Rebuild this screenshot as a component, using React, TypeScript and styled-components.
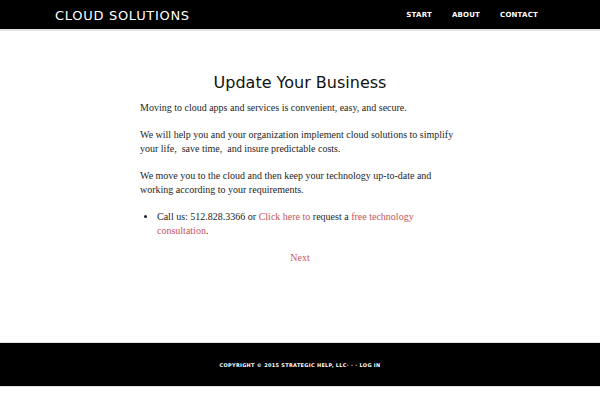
import { createGlobalStyle, styled } from "styled-components";

const Global = createGlobalStyle`
  html, body { margin: 0; padding: 0; background: #fff; }
  body { font-family: "Liberation Serif", serif; }
`;

const Page = styled.div`
  display: flex;
  flex-direction: column;
  min-height: 400px;
`;

const Header = styled.header`
  height: 29px;
  background: #000;
  border-bottom: 2px solid #e2e2e2;
  display: flex;
  align-items: center;
  justify-content: space-between;
  padding: 0 62px 0 55px;
`;

const Logo = styled.div`
  font-family: "DejaVu Sans", sans-serif;
  color: #fff;
  font-size: 13px;
  letter-spacing: 0.7px;
  padding-top: 1px;
`;

const Nav = styled.nav`
  display: flex;
  gap: 20px;
`;

const NavLink = styled.a`
  font-family: "DejaVu Sans", sans-serif;
  color: #fff;
  font-size: 7px;
  font-weight: bold;
  letter-spacing: 0.2px;
  text-decoration: none;
`;

const Main = styled.main`
  width: 320px;
  margin: 0 auto;
  padding-top: 42px;
  height: 269px;
  color: #1e1e1e;
  font-size: 10px;
  line-height: 14px;
`;

const Title = styled.h1`
  font-family: "DejaVu Sans", sans-serif;
  font-weight: normal;
  font-size: 16px;
  line-height: 20px;
  color: #111;
  text-align: center;
  margin: 0 0 8px;
`;

const Para = styled.p`
  margin: 0 0 13px;
`;

const List = styled.ul`
  margin: 0 0 13px;
  padding-left: 17px;
`;

const Link = styled.a`
  color: #c9545e;
  text-decoration: none;
`;

const NextRow = styled.div`
  text-align: center;
`;

const Footer = styled.footer`
  border-top: 1px solid #e2e2e2;
  border-bottom: 1px solid #e2e2e2;
  background: #000;
  height: 43px;
  display: flex;
  align-items: center;
  justify-content: center;
  color: #fff;
  font-family: "DejaVu Sans", sans-serif;
  font-size: 5px;
  font-weight: bold;
  letter-spacing: 0.3px;
`;

export default function App() {
  return (
    <Page>
      <Global />
      <Header>
        <Logo>CLOUD SOLUTIONS</Logo>
        <Nav>
          <NavLink href="#">START</NavLink>
          <NavLink href="#">ABOUT</NavLink>
          <NavLink href="#">CONTACT</NavLink>
        </Nav>
      </Header>
      <Main>
        <Title>Update Your Business</Title>
        <Para>Moving to cloud apps and services is convenient, easy, and secure.</Para>
        <Para>
          We will help you and your organization implement cloud solutions to simplify your life,&nbsp; save time,&nbsp; and insure predictable costs.
        </Para>
        <Para>
          We move you to the cloud and then keep your technology up-to-date and working according to your requirements.
        </Para>
        <List>
          <li>
            Call us: 512.828.3366 or <Link href="#">Click here to</Link> request a{" "}
            <Link href="#">free technology consultation</Link>.
          </li>
        </List>
        <NextRow>
          <Link href="#">Next</Link>
        </NextRow>
      </Main>
      <Footer>COPYRIGHT © 2015 STRATEGIC HELP, LLC· · · LOG IN</Footer>
    </Page>
  );
}
